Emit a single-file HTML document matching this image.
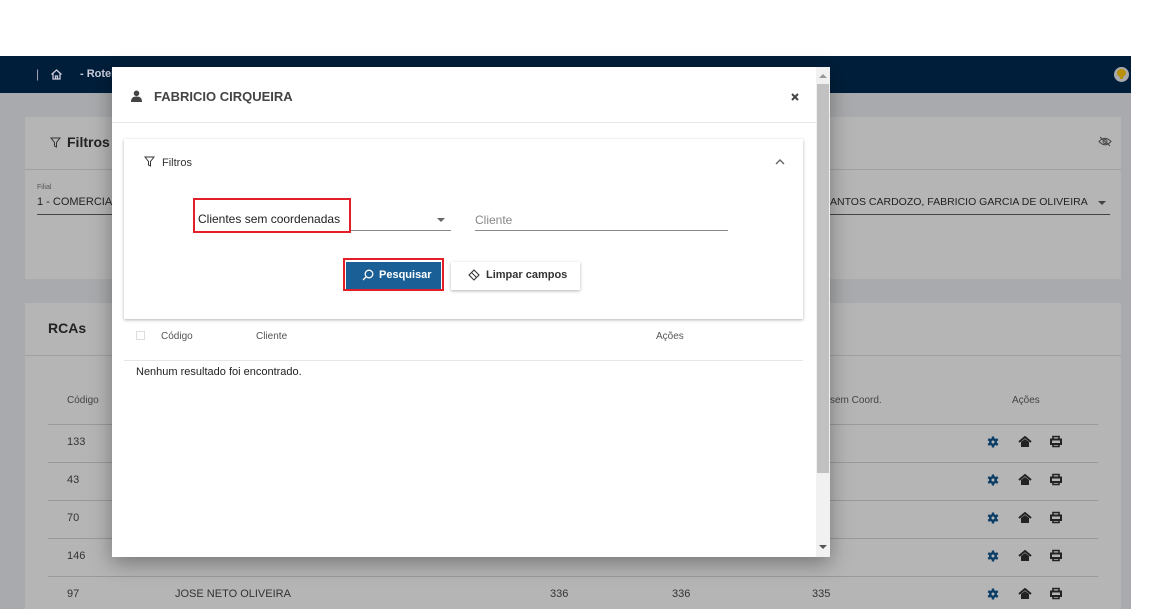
<!DOCTYPE html>
<html><head><meta charset="utf-8"><style>
*{box-sizing:border-box;margin:0;padding:0}
body{width:1152px;height:609px;overflow:hidden;background:#fff;font-family:"Liberation Sans",sans-serif;position:relative;color:#222}
.a{position:absolute}
.t{font-size:11px;color:#333;white-space:nowrap}
</style></head><body>
<div class="a" style="left:0;top:56px;width:1131px;height:37px;background:#001e3a"></div>
<div class="a" style="left:0;top:93px;width:1131px;height:516px;background:#a9aaad"></div>
<div class="a t" style="left:36px;top:67px;color:#aab;font-size:12px">|</div>
<svg class="a" style="left:50px;top:68px" width="13" height="13" viewBox="0 0 13 13"><path d="M1.5 6.5L6.5 2l5 4.5M3 5.5V11h7V5.5M5.5 11V8h2v3" fill="none" stroke="#ccd" stroke-width="1.3"/></svg>
<div class="a t" style="left:80px;top:68px;color:#ccd;font-weight:bold">- Rotei</div>
<div class="a" style="left:1114px;top:67px;width:15px;height:15px;border-radius:50%;background:#a9aaad"></div>
<div class="a" style="left:1117px;top:69px;width:9px;height:8px;border-radius:50%;background:#b8900a"></div>
<div class="a" style="left:1120px;top:76px;width:3px;height:3px;background:#b8900a"></div>

<div class="a" style="left:25px;top:117px;width:1096px;height:162px;background:#b5b5b5"></div>
<div class="a" style="left:25px;top:169px;width:1096px;height:1px;background:#a0a0a0"></div>
<div class="a t" style="left:67px;top:134px;font-size:14px;font-weight:bold;color:#222">Filtros d</div>
<svg class="a" style="left:50px;top:137px" width="11" height="11"><path d="M1 1h9L6.5 5.5V10L4.5 9V5.5z" fill="none" stroke="#333"/></svg>
<div class="a t" style="left:37px;top:184px;font-size:7px;color:#555">Filial</div>
<div class="a t" style="left:37px;top:196px;color:#222">1 - COMERCIAL</div>
<div class="a" style="left:37px;top:214px;width:80px;height:1px;background:#444"></div>
<div class="a t" style="left:830px;top:196px;color:#222;width:258px;overflow:hidden;font-size:10.5px">ANTOS CARDOZO, FABRICIO GARCIA DE OLIVEIRA, ...</div>
<div class="a" style="left:1098px;top:201px;border:4px solid transparent;border-top:4px solid #444"></div>
<div class="a" style="left:830px;top:214px;width:280px;height:1px;background:#444"></div>
<svg class="a" style="left:1098px;top:136px" width="14" height="11"><path d="M1 5.5Q7 -1 13 5.5Q7 12 1 5.5z" fill="none" stroke="#444"/><circle cx="7" cy="5.5" r="2" fill="none" stroke="#444"/><path d="M2 1l10 9" stroke="#444"/></svg>

<div class="a" style="left:25px;top:303px;width:1096px;height:306px;background:#b5b5b5"></div>
<div class="a" style="left:25px;top:355px;width:1096px;height:1px;background:#a0a0a0"></div>
<div class="a t" style="left:48px;top:320px;font-size:14px;font-weight:bold;color:#222">RCAs</div>
<div class="a t" style="left:67px;top:395px;font-size:10px;color:#444">Código</div>
<div class="a t" style="left:830px;top:395px;font-size:10px;color:#444">sem Coord.</div>
<div class="a t" style="left:1012px;top:395px;font-size:10px;color:#444">Ações</div>
<div class="a" style="left:48px;top:424px;width:1050px;height:1px;background:#999"></div>
<div class="a" style="left:48px;top:462px;width:1050px;height:1px;background:#999"></div>
<div class="a" style="left:48px;top:500px;width:1050px;height:1px;background:#999"></div>
<div class="a" style="left:48px;top:538px;width:1050px;height:1px;background:#999"></div>
<div class="a" style="left:48px;top:576px;width:1050px;height:1px;background:#999"></div>
<div class="a t" style="left:67px;top:436px">133</div>
<div class="a t" style="left:67px;top:474px">43</div>
<div class="a t" style="left:67px;top:512px">70</div>
<div class="a t" style="left:67px;top:550px">146</div>
<div class="a t" style="left:67px;top:588px">97</div>
<div class="a t" style="left:175px;top:588px">JOSE NETO OLIVEIRA</div>
<div class="a t" style="left:550px;top:588px">336</div>
<div class="a t" style="left:672px;top:588px">336</div>
<div class="a t" style="left:812px;top:588px">335</div>

<svg class="a" style="left:980px;top:430px" width="100" height="180">
<defs>
<g id="r">
<g transform="translate(13,12)"><circle r="4" fill="#0b3d66"/><g stroke="#0b3d66" stroke-width="2.4"><path d="M0 -5.5V5.5M-4.8 -2.8L4.8 2.8M-4.8 2.8L4.8 -2.8"/></g><circle r="1.5" fill="#b5b5b5"/></g>
<path d="M39 12L45 7L51 12" fill="none" stroke="#222" stroke-width="2"/><path d="M41 12v5h8v-5l-4-3z" fill="#222"/>
<path d="M71 9.5h10v4.5H71z" fill="none" stroke="#222" stroke-width="2"/><path d="M73 9V6.5h6V9M73 14v2.5h6V14" fill="none" stroke="#222" stroke-width="1.6"/>
</g>
</defs>
<use href="#r" y="0"/><use href="#r" y="38"/><use href="#r" y="76"/><use href="#r" y="114"/><use href="#r" y="152"/>
</svg>

<!-- modal -->
<div class="a" style="left:112px;top:67px;width:718px;height:490px;background:#fff;box-shadow:0 6px 20px rgba(0,0,0,.35)"></div>
<div class="a" style="left:816px;top:67px;width:14px;height:490px;background:#f1f1f1"></div>
<div class="a" style="left:817px;top:84px;width:12px;height:389px;background:#c1c1c1"></div>
<div class="a" style="left:819px;top:74px;border:4px solid transparent;border-bottom:4px solid #999;border-top:0"></div>
<div class="a" style="left:819px;top:545px;border:4px solid transparent;border-top:4px solid #555;border-bottom:0"></div>
<svg class="a" style="left:131px;top:90px" width="11" height="12"><circle cx="5.5" cy="3.3" r="2.8" fill="#444"/><path d="M0 12c0-4 2-5.5 5.5-5.5S11 8 11 12z" fill="#444"/></svg>
<div class="a t" style="left:154px;top:89px;font-size:13px;font-weight:bold;color:#444">FABRICIO CIRQUEIRA</div>
<svg class="a" style="left:791px;top:93px" width="8" height="8"><path d="M1 1l6 6M7 1L1 7" stroke="#444" stroke-width="2"/></svg>
<div class="a" style="left:112px;top:122px;width:704px;height:1px;background:#e6e6e6"></div>

<div class="a" style="left:124px;top:139px;width:679px;height:180px;background:#fff;box-shadow:0 1px 3px rgba(0,0,0,.3)"></div>
<svg class="a" style="left:144px;top:156px" width="11" height="11"><path d="M1 1h9L6.5 5.5V10L4.5 9V5.5z" fill="none" stroke="#333"/></svg>
<div class="a t" style="left:162px;top:157px;color:#333">Filtros</div>
<svg class="a" style="left:775px;top:158px" width="10" height="7"><path d="M1 6l4-4 4 4" fill="none" stroke="#666" stroke-width="1.4"/></svg>
<div class="a" style="left:193px;top:198px;width:158px;height:35px;border:2px solid #e41e26"></div>
<div class="a t" style="left:198px;top:212px;font-size:12px;color:#222">Clientes sem coordenadas</div>
<div class="a" style="left:351px;top:230px;width:100px;height:1px;background:#888"></div>
<div class="a" style="left:437px;top:218px;border:4px solid transparent;border-top:4px solid #666"></div>
<div class="a t" style="left:475px;top:213px;font-size:12px;color:#888">Cliente</div>
<div class="a" style="left:475px;top:230px;width:253px;height:1px;background:#888"></div>
<div class="a" style="left:343px;top:258px;width:101px;height:33px;border:2px solid #e41e26"></div>
<div class="a" style="left:346px;top:262px;width:95px;height:27px;background:#1a5f96"></div>
<svg class="a" style="left:362px;top:269px" width="12" height="12"><circle cx="7" cy="5" r="3.8" fill="none" stroke="#fff" stroke-width="1.3"/><path d="M4.3 7.7L1 11" stroke="#fff" stroke-width="1.3"/></svg>
<div class="a t" style="left:379px;top:269px;font-size:11px;font-weight:bold;color:#fff">Pesquisar</div>
<div class="a" style="left:451px;top:262px;width:129px;height:28px;background:#fff;box-shadow:0 1px 3px rgba(0,0,0,.3)"></div>
<svg class="a" style="left:468px;top:269px" width="12" height="12"><path d="M6 1l5 5-5 5-5-5z" fill="none" stroke="#333" stroke-width="1.1"/><path d="M3.5 3.5l5 5" stroke="#333"/></svg>
<div class="a t" style="left:486px;top:269px;font-size:11px;font-weight:bold;color:#333">Limpar campos</div>
<div class="a" style="left:136px;top:331px;width:9px;height:9px;border:1px solid #ddd"></div>
<div class="a t" style="left:161px;top:331px;font-size:10px;color:#555">Código</div>
<div class="a t" style="left:256px;top:331px;font-size:10px;color:#555">Cliente</div>
<div class="a t" style="left:656px;top:331px;font-size:10px;color:#555">Ações</div>
<div class="a" style="left:124px;top:360px;width:679px;height:1px;background:#e6e6e6"></div>
<div class="a t" style="left:136px;top:366px;color:#222">Nenhum resultado foi encontrado.</div>
</body></html>
